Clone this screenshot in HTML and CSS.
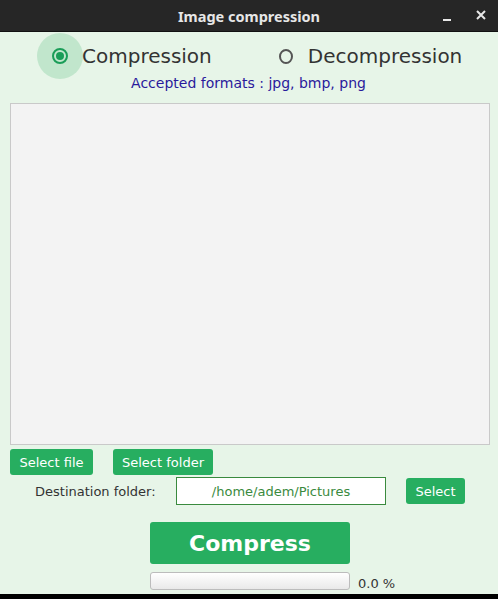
FILE: index.html
```html
<!DOCTYPE html>
<html>
<head>
<meta charset="utf-8">
<link rel="stylesheet" href="styles.css">
</head>
<body>
<div class="window">
  <div class="titlebar">
    <span class="title">Image compression</span>
    <div class="controls">
      <span class="ctl-min"></span>
      <svg class="ctl-close" width="10" height="10" viewBox="0 0 10 10"><path d="M1 1L9 9M9 1L1 9" stroke="#e8e8e8" stroke-width="2"/></svg>
    </div>
  </div>
  <div class="content">
    <div class="radio-row">
      <label class="radio checked"><span class="halo"><span class="ring"><span class="dot"></span></span></span><span class="rlabel">Compression</span></label>
      <label class="radio"><span class="halo plain"><span class="ring"></span></span><span class="rlabel">Decompression</span></label>
    </div>
    <div class="formats">Accepted formats : jpg, bmp, png</div>
    <div class="dropzone"></div>
    <div class="btn-row">
      <button class="btn btn-file">Select file</button>
      <button class="btn btn-folder">Select folder</button>
    </div>
    <div class="dest-row">
      <span class="dest-label">Destination folder:</span>
      <div class="dest-field">/home/adem/Pictures</div>
      <button class="btn btn-select">Select</button>
    </div>
    <div class="compress-row">
      <button class="btn-compress">Compress</button>
    </div>
    <div class="progress-row">
      <div class="progress"></div>
      <span class="pct">0.0 %</span>
    </div>
  </div>
  <div class="bottom"></div>
</div>
</body>
</html>
```
FILE: styles.css
```css
html, body {
  margin: 0;
  padding: 0;
}
body {
  width: 498px;
  height: 599px;
  overflow: hidden;
  background: #e7f5e8;
  font-family: "DejaVu Sans", sans-serif;
}
.window {
  display: flex;
  flex-direction: column;
  height: 599px;
}
.titlebar {
  height: 32px;
  background: #262626;
  display: flex;
  align-items: center;
  justify-content: center;
  position: relative;
  border-bottom: 1px solid #111;
  box-sizing: border-box;
}
.title {
  color: #e6e6e6;
  font-weight: bold;
  font-size: 14.5px;
  font-family: "Noto Sans", "DejaVu Sans", sans-serif;
}
.controls {
  position: absolute;
  right: 12px;
  top: 0;
  height: 31px;
  display: flex;
  align-items: center;
  gap: 25px;
}
.ctl-min {
  width: 8px;
  height: 2px;
  background: #e8e8e8;
  margin-top: 9px;
}
.ctl-close {
  margin-top: -2px;
}
.content {
  flex: 1;
  display: flex;
  flex-direction: column;
}
.radio-row {
  display: flex;
  align-items: center;
  height: 46px;
  margin-top: 1px;
  padding-left: 37px;
}
.radio {
  display: flex;
  align-items: center;
  font-size: 20px;
  color: #333;
}
.halo {
  width: 46px;
  height: 46px;
  border-radius: 50%;
  background: #c1e6cc;
  display: flex;
  align-items: center;
  justify-content: center;
}
.halo.plain {
  background: transparent;
  width: 14px;
  height: 14px;
  margin-right: 15px;
}
.ring {
  width: 12px;
  height: 12px;
  border: 2px solid #1a9d58;
  border-radius: 50%;
  display: flex;
  align-items: center;
  justify-content: center;
  box-sizing: content-box;
}
.halo.plain .ring {
  border-color: #555;
  width: 11px;
  height: 11px;
}
.dot {
  width: 8px;
  height: 8px;
  border-radius: 50%;
  background: #1a9d58;
}
.radio.checked .rlabel {
  margin-left: -1px;
}
.radio.checked {
  margin-right: 67px;
}
.formats {
  text-align: center;
  color: #2a1a9c;
  font-size: 14px;
  line-height: 18px;
  margin-top: -5px;
  padding-right: 1px;
}
.dropzone {
  margin: 11px 8px 0 10px;
  height: 340px;
  background: #f3f3f3;
  border: 1px solid #c9c9c9;
}
.btn {
  background: #27ae60;
  color: #fff;
  border: none;
  border-radius: 3px;
  font-family: "DejaVu Sans", sans-serif;
  font-size: 13px;
  padding: 0;
  height: 26px;
}
.btn-row {
  display: flex;
  gap: 20px;
  margin: 4px 0 0 10px;
}
.btn-file { width: 83px; }
.btn-folder { width: 100px; }
.dest-row {
  display: flex;
  align-items: center;
  margin-top: 2px;
  height: 28px;
}
.dest-label {
  font-size: 13px;
  color: #333;
  margin-left: 35px;
  width: 141px;
}
.dest-field {
  width: 210px;
  height: 28px;
  box-sizing: border-box;
  border: 1.5px solid #3a8a3e;
  background: #fff;
  color: #3a8a3e;
  font-size: 13px;
  display: flex;
  align-items: center;
  justify-content: center;
}
.btn-select {
  width: 59px;
  margin-left: 20px;
}
.compress-row {
  margin-top: 17px;
  padding-left: 150px;
}
.btn-compress {
  width: 200px;
  height: 42px;
  background: #27ae60;
  color: #fff;
  border: none;
  border-radius: 3px;
  font-family: "DejaVu Sans", sans-serif;
  font-weight: bold;
  font-size: 22px;
  padding: 0;
}
.progress-row {
  display: flex;
  align-items: center;
  margin-top: 6px;
  padding-left: 150px;
}
.progress {
  width: 200px;
  height: 18px;
  box-sizing: border-box;
  border: 1px solid #bcbcbc;
  border-radius: 3px;
  background: linear-gradient(#ffffff, #e9e9e9);
}
.pct {
  font-size: 13px;
  color: #333;
  margin-left: 8px;
  margin-top: 6px;
}
.bottom {
  height: 5px;
  background: #000;
}
```
